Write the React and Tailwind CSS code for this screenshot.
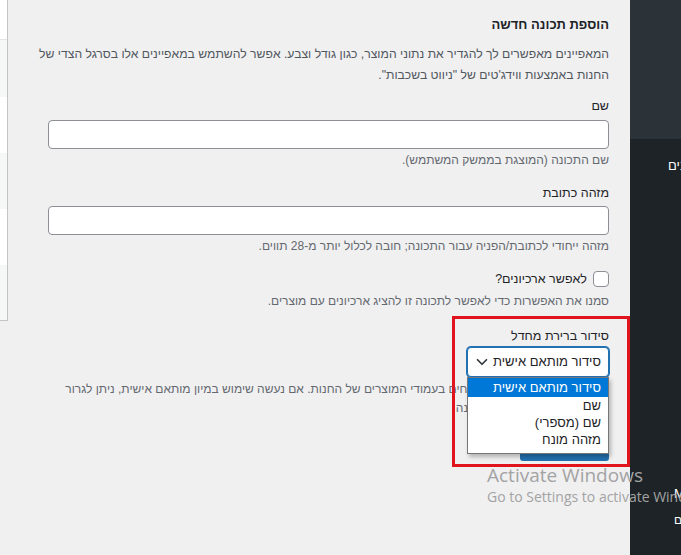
import { ChevronDown } from 'lucide-react';

const font = { fontFamily: '"Liberation Sans", "DejaVu Sans", sans-serif' };

const App = () => {
  const options = ['סידור מותאם אישית', 'שם', 'שם (מספרי)', 'מזהה מונח'];

  return (
    <div
      className="relative w-[681px] h-[555px] overflow-hidden bg-[#f0f0f1] flex"
      style={font}
    >
      {/* table edge on the left */}
      <div className="w-[8px] shrink-0 h-[321px] border-r border-b border-[#c3c4c7] flex flex-col">
        <div className="h-[40px] bg-white border-b border-[#e4e5e7]"></div>
        <div className="h-[57px] bg-[#f6f7f7]"></div>
        <div className="h-[56px] bg-white"></div>
        <div className="h-[56px] bg-[#f6f7f7]"></div>
        <div className="h-[56px] bg-white"></div>
        <div className="flex-1 bg-[#f6f7f7]"></div>
      </div>

      {/* form */}
      <div dir="rtl" className="ml-[40px] w-[561px] shrink-0 pt-[14px] text-[#1d2327]">
        <h2 className="text-[13px] font-bold leading-[22px]">הוספת תכונה חדשה</h2>
        <p className="mt-[8px] text-[12.2px] leading-[21px] text-[#50575e] whitespace-nowrap">
          המאפיינים מאפשרים לך להגדיר את נתוני המוצר, כגון גודל וצבע. אפשר להשתמש במאפיינים אלו בסרגל הצדי של
          <br />
          החנות באמצעות ווידג'טים של "ניווט בשכבות".
        </p>

        <label className="block mt-[11px] text-[12.5px] leading-[18px]">שם</label>
        <input className="block mt-[5px] w-full h-[29px] bg-white border border-[#8c8f94] rounded-[4px]" />
        <p className="mt-[2px] text-[12px] leading-[19px] text-[#646970]">שם התכונה (המוצגת בממשק המשתמש).</p>

        <label className="block mt-[14px] text-[12.5px] leading-[18px]">מזהה כתובת</label>
        <input className="block mt-[4px] w-full h-[29px] bg-white border border-[#8c8f94] rounded-[4px]" />
        <p className="mt-[2px] text-[12px] leading-[19px] text-[#646970]">
          מזהה ייחודי לכתובת/הפניה עבור התכונה; חובה לכלול יותר מ-28 תווים.
        </p>

        <div className="mt-[14px] flex items-center gap-[6px] h-[18px]">
          <span className="w-[16px] h-[16px] bg-white border border-[#8c8f94] rounded-[4px]"></span>
          <span className="text-[12.5px]">לאפשר ארכיונים?</span>
        </div>
        <p className="mt-[4px] text-[12px] leading-[19px] text-[#646970]">
          סמנו את האפשרות כדי לאפשר לתכונה זו להציג ארכיונים עם מוצרים.
        </p>

        <label className="block mt-[16px] text-[12.5px] leading-[18px]">סידור ברירת מחדל</label>
        <div className="relative mt-[2px] w-[142px] h-[30px]">
          <div className="h-full bg-white border border-[#2271b1] rounded-[4px] shadow-[0_0_0_1px_#2271b1] flex items-center justify-between pr-[7px] pl-[5px] text-[13px] whitespace-nowrap">
            <span>סידור מותאם אישית</span>
            <ChevronDown size={18} strokeWidth={2.2} className="text-[#2c3338]" />
          </div>
          <ul className="absolute top-full right-0 w-full bg-white border border-[#767676] shadow-[2px_3px_4px_rgba(0,0,0,0.25)] z-10 pb-[5px] text-[13px] leading-[17px] whitespace-nowrap">
            {options.map((o, i) => (
              <li
                key={o}
                className={i === 0 ? 'bg-[#0078d7] text-white px-[7px] py-[1px]' : 'px-[7px]'}
              >
                {o}
              </li>
            ))}
          </ul>
        </div>
        <p className="mt-[3px] text-[12px] leading-[19px] text-[#646970] whitespace-nowrap">
          קובע את סדר המיון של המונחים בעמודי המוצרים של החנות. אם נעשה שימוש במיון מותאם אישית, ניתן לגרור
          <br />
          ולשחרר את המונחים שבתכונה
        </p>
        <button className="mt-[14px] h-[29px] w-[89px] rounded-[3px] bg-[#2271b1] text-white text-[12.5px]">
          הוספת תכונה
        </button>
      </div>

      {/* admin sidebar */}
      <div className="ml-[21px] w-[51px] shrink-0 flex flex-col bg-[#1d2327] text-white text-[13px]">
        <div className="h-[139px] bg-[#2c3338]"></div>
        <div dir="ltr" className="mt-[17px] pl-[38px] whitespace-nowrap">
          <span dir="rtl">מאפיינים</span>
        </div>
        <div dir="ltr" className="mt-[308px] pl-[44px] whitespace-nowrap">
          <span>Mo</span>
        </div>
        <div dir="ltr" className="mt-[8px] pl-[44px] whitespace-nowrap text-[12px]">
          <span dir="rtl">מוצרים</span>
        </div>
      </div>

      {/* annotation frame */}
      <div className="absolute left-[452px] top-[316px] w-[178px] h-[151px] border-[3px] border-[#e0141c] pointer-events-none"></div>

      {/* windows watermark */}
      <div
        className="absolute z-20 left-[487px] top-[463px] whitespace-nowrap text-[#a3a3a3] pointer-events-none"
        style={{ fontFamily: '"Open Sans", "Noto Sans", sans-serif' }}
      >
        <div className="text-[19px] leading-[24px]">Activate Windows</div>
        <div className="text-[14px] leading-[20px]">Go to Settings to activate Windows.</div>
      </div>
    </div>
  );
};

export default App;
